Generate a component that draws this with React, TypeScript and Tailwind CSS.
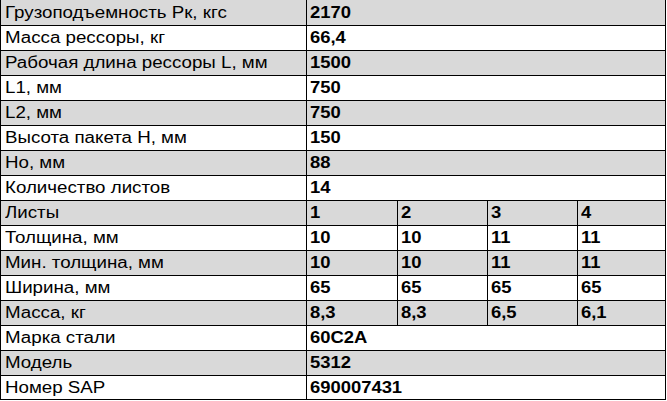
const rows: { label: string; value?: string; sheets?: string[] }[] = [
  { label: 'Грузоподъемность Рк, кгс', value: '2170' },
  { label: 'Масса рессоры, кг', value: '66,4' },
  { label: 'Рабочая длина рессоры L, мм', value: '1500' },
  { label: 'L1, мм', value: '750' },
  { label: 'L2, мм', value: '750' },
  { label: 'Высота пакета H, мм', value: '150' },
  { label: 'Hо, мм', value: '88' },
  { label: 'Количество листов', value: '14' },
  { label: 'Листы', sheets: ['1', '2', '3', '4'] },
  { label: 'Толщина, мм', sheets: ['10', '10', '11', '11'] },
  { label: 'Мин. толщина, мм', sheets: ['10', '10', '11', '11'] },
  { label: 'Ширина, мм', sheets: ['65', '65', '65', '65'] },
  { label: 'Масса, кг', sheets: ['8,3', '8,3', '6,5', '6,1'] },
  { label: 'Марка стали', value: '60C2A' },
  { label: 'Модель', value: '5312' },
  { label: 'Номер SAP', value: '690007431' },
];

const sheetWidths = ['w-[91px]', 'w-[90px]', 'w-[90px]', 'flex-1'];

// the source image is a little wider than plain Arial renders, so stretch the glyphs
function Label({ children }: { children: React.ReactNode }) {
  return <span className="inline-block origin-left scale-x-[1.17] whitespace-nowrap">{children}</span>;
}

function Value({ children }: { children: React.ReactNode }) {
  return <span className="inline-block origin-left scale-x-[1.15] whitespace-nowrap font-bold">{children}</span>;
}

export default function App() {
  return (
    <div className="w-[667px] h-[401px] bg-white overflow-hidden font-['Liberation_Sans',Arial,sans-serif] text-[16px] leading-[24px] text-black">
      <div className="w-[666px] border-l border-r border-b border-black">
        {rows.map((row, i) => (
          <div
            key={i}
            className={`flex ${i === 0 ? 'h-[25px] leading-[25px]' : 'border-t border-black'} ${
              i === rows.length - 1 ? 'h-[24px]' : i === 0 ? '' : 'h-[25px]'
            } ${i % 2 === 0 ? 'bg-[#d9d9d9]' : 'bg-white'}`}
          >
            <div className="w-[305px] pl-[4px]">
              <Label>{row.label}</Label>
            </div>
            {row.sheets ? (
              row.sheets.map((s, j) => (
                <div key={j} className={`${sheetWidths[j]} border-l border-black pl-[3px]`}>
                  <Value>{s}</Value>
                </div>
              ))
            ) : (
              <div className="flex-1 border-l border-black pl-[3px]">
                <Value>{row.value}</Value>
              </div>
            )}
          </div>
        ))}
      </div>
    </div>
  );
}
